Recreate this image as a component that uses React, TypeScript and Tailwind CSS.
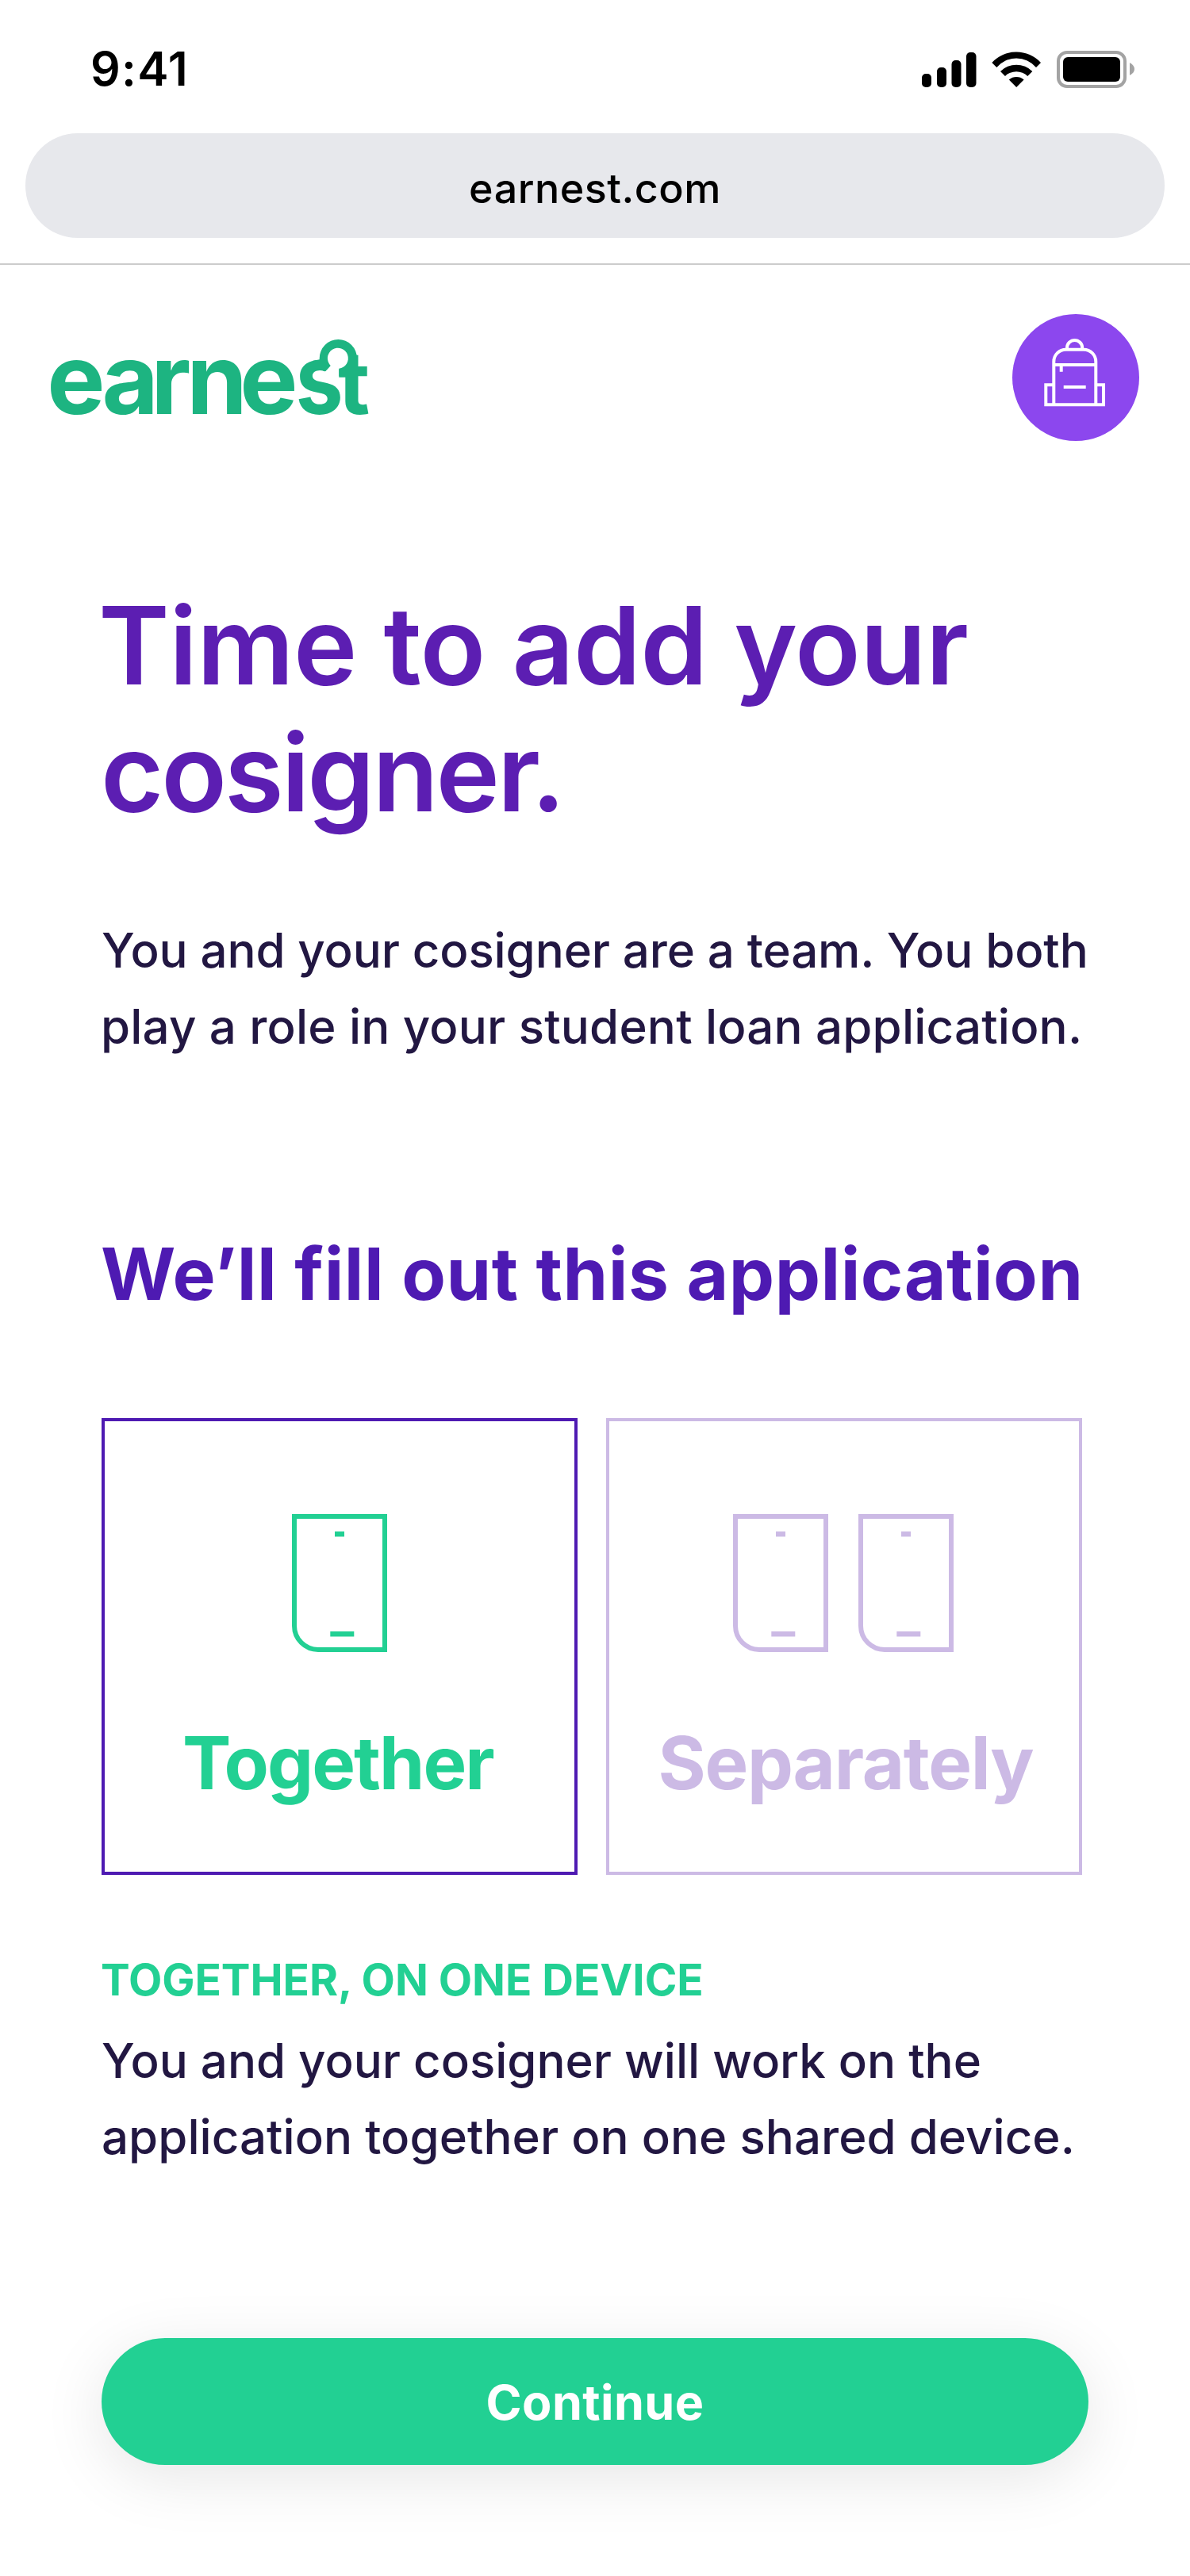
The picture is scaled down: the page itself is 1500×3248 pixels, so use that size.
function StatusIcons() {
  return (
    <svg width="270" height="50" viewBox="1160 62 270 50" aria-hidden="true">
      <g fill="#000">
        <rect x="1162" y="93" width="12" height="17" rx="5" />
        <rect x="1181" y="85" width="12" height="25" rx="5" />
        <rect x="1199.5" y="76" width="12" height="34" rx="5" />
        <rect x="1218" y="66" width="12.5" height="44" rx="5" />
        <path d="M1250.3 79A42 42 0 0 1 1312 79L1306 85A32.500 32.500 0 0 0 1256.300 85Z" />
        <path d="M1261 90A28.500 28.500 0 0 1 1301.300 90L1295.300 96A20 20 0 0 0 1267 96Z" />
        <path d="M1271.800 100.500A14.500 14.500 0 0 1 1290.600 100.500L1281.200 110Z" />
        <rect x="1340" y="72" width="72" height="31" rx="6" />
      </g>
      <rect x="1334" y="66" width="84" height="43" rx="11" fill="none" stroke="#a3a3a3" strokeWidth="4" />
      <path d="M1424 79C1428 81 1430 84 1430 87S1428 93 1424 95Z" fill="#a3a3a3" />
    </svg>
  );
}

function Logo() {
  return (
    <svg width="430" height="134" viewBox="-10 -6 430 134" role="img" aria-label="earnest">
      <g fill="#1db481" className="font-['Inter',sans-serif] text-[123px] font-[670]">
        <text x="-4.8 64.5 126.3 171.300 238.200" y="94">
          earne
        </text>
        <text transform="translate(308.500 94) scale(.875 1)">s</text>
        <text x="362" y="94" fontSize="110" className="text-[110px]">
          t
        </text>
      </g>
      {/* opens the counter of the s and the inside of the ring */}
      <path d="M340 39.500L346 40.300L352.700 33L363.300 37V49L356 55L340 50.500Z" fill="#fff" />
      <circle cx="362.3" cy="23.700" r="14" fill="#fff" />
      {/* ring that ties the s to the t */}
      <path
        d="M346 40.300L352.700 33A13 13 0 1 1 363.300 36.700V47.700H386V23.700A23.650 23.650 0 0 0 338.700 23.700V25.300L330 27V36.700L338.700 37Z"
        fill="#1db481"
      />
    </svg>
  );
}

function Backpack() {
  return (
    <svg width="160" height="160" viewBox="0 0 160 160" fill="none" stroke="#fff" strokeWidth="4" aria-hidden="true">
      <path d="M52.300 114.300V60A15.300 15.300 0 0 1 67.600 44.700H90A15.300 15.300 0 0 1 105.300 60V114.300" />
      <path d="M69 44V42.500A9.600 9.600 0 0 1 88.200 42.500V44M52.300 64H105.300M61.700 64V72.700M64.700 92H92.700" />
      <path d="M52.300 89.300H42.300V114.300H115V89.300H105.300" />
    </svg>
  );
}

function Phone() {
  return (
    <svg width="120" height="174" viewBox="0 0 120 174" fill="none" stroke="currentColor" strokeWidth="6" aria-hidden="true">
      <path d="M3 3H117V171H33A30 30 0 0 1 3 141Z" />
      <path d="M54 25.300H66M48.300 151.300H78.300" strokeWidth="6.500" />
    </svg>
  );
}

export default function App() {
  return (
    <div className="flex h-[3248px] w-[1500px] flex-col bg-white font-['Inter',sans-serif]">
      <header className="flex h-[334px] flex-col border-b-2 border-[#cccccc]">
        <div className="flex h-[168px] items-start justify-between pr-[70px] pl-[114px]">
          <span className="mt-[56px] text-[59px] leading-[62px] font-semibold tracking-[1.3px]">9:41</span>
          <span className="mt-[62px]">
            <StatusIcons />
          </span>
        </div>
        <div className="mx-8 flex h-[132px] items-center justify-center rounded-full bg-[#e7e8ec] pt-[7px] text-[52px] leading-[60px] font-[450] tracking-[0.5px] text-black">
          earnest.com
        </div>
      </header>

      <div className="flex h-[222px] items-end justify-between pr-16 pl-[54px]">
        <Logo />
        <span className="flex size-40 rounded-full bg-[#8c47ee]">
          <Backpack />
        </span>
      </div>

      <main className="flex flex-col px-32">
        <h1 className="mt-[178px] text-[136px] leading-[160px] font-semibold whitespace-nowrap text-[#5c1eb2]">
          <span className="-ml-1 block tracking-[-0.6px]">Time to add your</span>
          <span className="-ml-px block tracking-[-3px]">cosigner.</span>
        </h1>

        <p className="mt-[96px] text-[60px] leading-[96px] font-[450] whitespace-nowrap text-[#221742]">
          <span className="block tracking-[-0.1px]">You and your cosigner are a team. You both</span>
          <span className="-ml-px block tracking-[0.2px]">play a role in your student loan application.</span>
        </p>

        <h2 className="mt-[208px] -ml-px text-[91px] leading-[112px] font-bold tracking-[0.5px] whitespace-nowrap text-[#4e1ab2]">
          We’ll fill out this application
        </h2>

        <div className="mt-[126px] flex gap-9">
          <button className="flex h-[576px] w-[600px] flex-col items-center border-4 border-[#4e1ab2] pt-[117px] text-[#22d093]">
            <Phone />
            <span className="mt-[85px] pr-1 text-[92px] leading-[110px] font-bold tracking-[-1.9px]">Together</span>
          </button>
          <button className="flex h-[576px] w-[600px] flex-col items-center border-4 border-[#ccbae5] pt-[117px] text-[#ccbae5]">
            <span className="flex gap-[38px] pr-0.5">
              <Phone />
              <Phone />
            </span>
            <span className="mt-[85px] pl-1 text-[92px] leading-[110px] font-bold tracking-[-1.3px]">Separately</span>
          </button>
        </div>

        <h3 className="mt-[92px] -ml-px text-[55px] leading-[80px] font-bold tracking-[-0.05px] whitespace-nowrap text-[#22d093]">
          TOGETHER, ON ONE DEVICE
        </h3>
        <p className="mt-[14px] text-[60px] leading-[96px] font-[450] whitespace-nowrap text-[#221742]">
          <span className="block">You and your cosigner will work on the</span>
          <span className="block tracking-[0.05px]">application together on one shared device.</span>
        </p>

        <button className="mt-[206px] flex h-40 w-[1244px] items-center justify-center rounded-full bg-[#22d093] pt-[3px] text-[61px] font-bold tracking-[0.4px] text-white shadow-[0_16px_80px_rgba(0,0,0,0.1)]">
          Continue
        </button>
      </main>
    </div>
  );
}
